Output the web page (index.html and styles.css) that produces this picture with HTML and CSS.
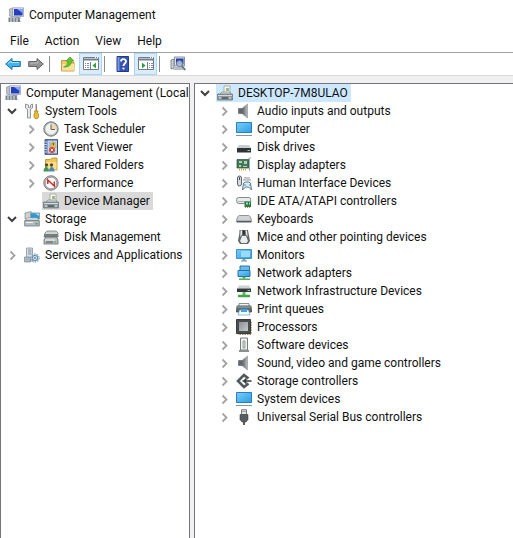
FILE: index.html
```html
<!DOCTYPE html>
<html lang="en">
<head>
<meta charset="utf-8">
<title>Computer Management</title>
<meta name="viewport" content="width=device-width, initial-scale=1">
<link rel="stylesheet" href="styles.css">
</head>
<body>
<svg class="sprite" aria-hidden="true">
  <defs>
    <linearGradient id="g-blue" x1="0" y1="0" x2="1" y2="1"><stop offset="0" stop-color="#7ccdf8"/><stop offset="1" stop-color="#2a9fe4"/></linearGradient>
    <linearGradient id="g-dark" x1="0" y1="0" x2="1" y2="0"><stop offset="0" stop-color="#555a5e"/><stop offset="1" stop-color="#b9bfc3"/></linearGradient>
    <linearGradient id="g-chip" x1="0" y1="0" x2="1" y2="1"><stop offset="0" stop-color="#8d9194"/><stop offset="1" stop-color="#c6c9cb"/></linearGradient>
  </defs>
  <symbol id="open" viewBox="0 0 16 16"><path d="M4 6l4 4 4-4" fill="none" stroke="#404040" stroke-width="2"/></symbol>
  <symbol id="closed" viewBox="0 0 16 16"><path d="M6.500 4.500l4 4-4 4" fill="none" stroke="#a3a3a3" stroke-width="1.800"/></symbol>
  <symbol id="console" viewBox="0 0 16 16">
    <path d="M1.500 2l3-1v9l-3-1z" fill="#b9c1c8" stroke="#778086" stroke-width=".5"/>
    <path d="M4.500 .8h11v8.700h-11z" fill="#dce1ed" stroke="#8d97b5" stroke-width=".7"/>
    <path d="M6 2h8.500v6.500H6z" fill="#243fbd"/><path d="M9 2h5.500v4z" fill="#8aa7f2"/>
    <path d="M8 9.500h4l1 2H7z" fill="#aeb5bd"/>
    <path d="M.5 10.500h11l1 4.500H.5z" fill="#78838b"/><path d="M2 12h2m1 0h2m1 0h2M2 14h2m1 0h2m1 0h2" stroke="#e7ecef"/>
  </symbol>
  <symbol id="back" viewBox="0 0 16 16"><path d="M.7 8L7 2.500V5.500h8.300v5H7v3z" fill="#43b4ee" stroke="#1672ad" stroke-width="1"/><path d="M3 7.500l3-2.500v1.500h8" fill="none" stroke="#a5e2fd"/></symbol>
  <symbol id="forward" viewBox="0 0 16 16"><path d="M15.300 8L9 2.500v3H.7v5H9v3z" fill="#949494" stroke="#646464" stroke-width="1"/><path d="M2 7h8V5" fill="none" stroke="#bdbdbd"/></symbol>
  <symbol id="up" viewBox="0 0 16 16"><path d="M1.500 4.500h5l1 1.500h6.500v9H1.500z" fill="#ecc866" stroke="#b48a34" stroke-width=".8"/><path d="M2 8h12v6.500H2z" fill="#fae39b"/><path d="M3.500 11c3-1 4.500-3 4.500-6H6l4-4 4 4h-2.500c0 4-3 6.500-8 6z" fill="#5fc52d" stroke="#3e961d" stroke-width=".6"/></symbol>
  <symbol id="pane-left" viewBox="0 0 16 16"><path d="M.5 1.500h15v12H.5z" fill="#fff" stroke="#747b82"/><path d="M1 3.500h14" stroke="#6e7f91" stroke-width="2"/><path d="M7.500 6v7" stroke="#747b82"/><path d="M2 7.500h4M2 9.500h4M2 11.500h4" stroke="#7890af" stroke-dasharray="1 1 2"/><path d="M13 6.500v6L9.500 9.500z" fill="#2aa13a"/><path d="M12 1.500h1m1 0h1" stroke="#fff"/></symbol>
  <symbol id="pane-right" viewBox="0 0 16 16"><path d="M.5 1.500h15v12H.5z" fill="#fff" stroke="#747b82"/><path d="M1 3.500h14" stroke="#6e7f91" stroke-width="2"/><path d="M9.500 6v7" stroke="#747b82"/><path d="M11 7.500h4M11 9.500h4M11 11.500h4" stroke="#7890af" stroke-dasharray="1 1 2"/><path d="M4 6.500v6l3.500-3z" fill="#2aa13a"/><path d="M12 1.500h1m1 0h1" stroke="#fff"/></symbol>
  <symbol id="help" viewBox="0 0 16 16"><path d="M2 .5h11.500v15H2z" fill="#3454b4" stroke="#223b87"/><path d="M2.500 1h2v14h-2z" fill="#7796df"/><path d="M6 5.500c0-3 5-3 5-.3C11 7.500 8.500 7.500 8.500 10" fill="none" stroke="#fff" stroke-width="1.800"/><circle cx="8.500" cy="12.500" r="1.100" fill="#fff"/></symbol>
  <symbol id="scan" viewBox="0 0 16 16"><path d="M1 4l3-1v9l-3 1z" fill="#cbd1d2" stroke="#6c7679" stroke-width=".8"/><path d="M4.500 1h10v9h-10z" fill="#dce0e8" stroke="#8993a7"/><path d="M6 2.500h7.500v6H6z" fill="#273ba4"/><path d="M5 11h7l2 3H3z" fill="#b4bdc2"/><circle cx="9.500" cy="7.500" r="3" fill="#b5cae7" fill-opacity=".85" stroke="#66758b"/><path d="M11.800 9.800l3.400 4.200" stroke="#626e7c" stroke-width="1.800"/></symbol>
  <symbol id="tools" viewBox="0 0 16 16"><path d="M1.500 1v4l2 1.500V15h3V6.500l2-1.500V1L6.500 2v2.500h-2V2z" fill="#e4e6e7" stroke="#7d8284" stroke-width=".8"/><path d="M11.500 1h1.500v7h-1.500z" fill="#8b9091"/><path d="M10.500 8h3.500l-.5 2 1 1v3l-1 1.500h-2.500l-1-1.500v-3l1-1z" fill="#edbd2d" stroke="#a9790b" stroke-width=".7"/></symbol>
  <symbol id="clock" viewBox="0 0 16 16"><circle cx="8" cy="8" r="7.200" fill="#a3a8ac" stroke="#777d82"/><circle cx="8" cy="8" r="5.700" fill="#f1f2ec" stroke="#d1d5d7" stroke-width=".7"/><path d="M8 8V2.500A5.500 5.500 0 0 1 13.500 8z" fill="#ebd8ac"/><path d="M8 3.500V8.500h4" fill="none" stroke="#5c6165"/></symbol>
  <symbol id="event" viewBox="0 0 16 16"><path d="M2 .7h12.500v14.600H2z" fill="#5975ac" stroke="#3c5077"/><path d="M4.500 1.500H14v13H4.500z" fill="#c5d3ea"/><path d="M1 3h3M1 5.500h3M1 8h3M1 10.500h3M1 13h3" stroke="#c7d2df"/><path d="M6 4h7M6 6h7M6 8h7" stroke="#8ca2c9"/><path d="M10 2l3.500 6h-6z" fill="#fcd33a" stroke="#bd9420" stroke-width=".5"/><path d="M10.300 4v2.500" stroke="#493800"/><circle cx="9" cy="11" r="3" fill="#d84237"/><path d="M7.800 9.800l2.400 2.400m0-2.400l-2.400 2.400" stroke="#fff"/></symbol>
  <symbol id="shared" viewBox="0 0 16 16"><path d="M2.500 2.500h5L9 1h5v12H2.500z" fill="#eec653" stroke="#b98d28" stroke-width=".8"/><path d="M3 5h10.500v7.500H3z" fill="#fbdf87"/><circle cx="3.500" cy="8" r="1.700" fill="#594b32"/><path d="M.5 14.500c0-6 5.500-6 5.500 0z" fill="#3f9853"/><circle cx="8.500" cy="8" r="1.700" fill="#594b32"/><path d="M6 14.500c0-6 5.500-6 5.500 0z" fill="#438dba"/></symbol>
  <symbol id="performance" viewBox="0 0 16 16"><circle cx="8" cy="8" r="7.200" fill="#bfc0c0" stroke="#777"/><circle cx="8" cy="8" r="5.700" fill="#fff" stroke="#8d8d8d" stroke-width=".7"/><path d="M4.800 9V5l6.500 6V6.500" fill="none" stroke="#cd302a" stroke-width="1.500"/></symbol>
  <symbol id="device" viewBox="0 0 16 16"><path d="M7 1h6v9H7z" fill="#f7f8ee" stroke="#939a91" stroke-width=".7"/><path d="M9 3h3v3H9z" fill="#a0b78d"/><path d="M3 9l2-2h8l1 2" fill="#d9dfe0" stroke="#788489" stroke-width=".7"/><path d="M.5 9h15v6H.5z" fill="#8d989c" stroke="#647176" stroke-width=".7"/><path d="M1 10.500h14" stroke="#d2dadb"/><path d="M5 12h6v2H5z" fill="#5c6a70"/><path d="M2 13h2M12 13h2" stroke="#e7ecec"/></symbol>
  <symbol id="storage" viewBox="0 0 16 16"><path d="M1 2l6-1.500 1 1.500v5L1 8z" fill="#c9d1d3" stroke="#899599" stroke-width=".8"/><path d="M6.500 2h9v6h-9z" fill="#2d9bd0" stroke="#8e9da6"/><path d="M11 2.500h4V5z" fill="#93e3fa"/><path d="M1.500 9l2-2h9.500l2 2z" fill="#eef1f1" stroke="#909a9c" stroke-width=".7"/><path d="M.7 9.500h14.600V15H.7z" fill="#b2babd" stroke="#69777d" stroke-width=".8"/><path d="M2 11.500h7" stroke="#eff3f3"/><path d="M11.500 12h2v1.500h-2z" fill="#3da447"/></symbol>
  <symbol id="disks" viewBox="0 0 16 16"><path d="M2 4l2-2h9l2 2v4H1z" fill="#cfd3d3" stroke="#777f80" stroke-width=".8"/><path d="M1 5h14v3H1z" fill="#777e80"/><path d="M2 9l1-1h10l2 2v5H1v-4z" fill="#b9bebe" stroke="#61696b" stroke-width=".8"/><path d="M2 11h10" stroke="#f4f5f5"/><path d="M3 13h7" stroke="#474f51"/><path d="M11 13h2" stroke="#56a45c"/></symbol>
  <symbol id="services" viewBox="0 0 16 16"><path d="M2.500 1h6v13h-6z" fill="#d7dfe4" stroke="#83939c" stroke-width=".8"/><path d="M4 3h3.500M4 5h3.500M4 7h3.500" stroke="#81939d"/><path d="M.5 10h6v5h-6z" fill="#a8b8c2" stroke="#71818b" stroke-width=".6"/><circle cx="11" cy="11" r="4" fill="none" stroke="#8eacc5" stroke-width="1.500" stroke-dasharray="1.500 1"/><circle cx="11" cy="11" r="2.600" fill="#d8e6f0" stroke="#6f94b4" stroke-width="1.200"/><circle cx="11" cy="11" r="1" fill="#6c8dac"/></symbol>
  <symbol id="speaker" viewBox="0 0 16 16"><path d="M2.500 5.500H6v5H2.500z" fill="#62676b" stroke="#474b4e" stroke-width=".5"/><path d="M6 5.500L11.500 1v14L6 10.500z" fill="url(#g-dark)" stroke="#7a7f83" stroke-width=".5"/></symbol>
  <symbol id="computer" viewBox="0 0 16 16"><path d="M.5 1.500h15v10H.5z" fill="url(#g-blue)" stroke="#2581b9"/><path d="M0 14.500h16" stroke="#8596a2"/></symbol>
  <symbol id="drive" viewBox="0 0 16 16"><path d="M3 6h10l2 3H1z" fill="#c9ccce"/><path d="M1 9h14v4.500H1z" fill="#303335"/><path d="M11.500 11.500H14" stroke="#6cdf68"/></symbol>
  <symbol id="display" viewBox="0 0 16 16"><path d="M1 2.500h12v8.500H1z" fill="#41785c" stroke="#29523e" stroke-width=".7"/><path d="M3 4h3v2H3zM8 4h3v3H8zM3 8h2v2H3zM7 9h4v1H7z" fill="#b8cfa8"/><path d="M3 12.500h7" stroke="#c3a43d" stroke-width="2" stroke-dasharray="1 1"/><path d="M12 2l3-1.500M13.500 1v13" stroke="#a7afb1" fill="none"/></symbol>
  <symbol id="hid" viewBox="0 0 16 16"><rect x="1.500" y="1" width="4" height="10" rx="2" fill="#d6dcdf" stroke="#596268"/><path d="M3.500 2v3" stroke="#4b5359"/><path d="M8 3h6M7 5h8" stroke="#b3b8ba" stroke-width="1.500"/><path d="M6.500 15l1-7 2-1h3l2 1 1 7-3-3h-3z" fill="#d9edf4" stroke="#58798a"/><path d="M8 10h2m3 0h1" stroke="#368ab0"/></symbol>
  <symbol id="ide" viewBox="0 0 16 16"><rect x=".7" y="4.500" width="14" height="6" rx="2" fill="#e9eced" stroke="#7e888a"/><path d="M2 8.500h11" stroke="#a7afb0"/><path d="M8.500 8.500H15V14H8.500z" fill="#27794b"/><path d="M10 9.500h2v2h-2zm3 0h1v2h-1z" fill="#a5dbb0"/><path d="M9 14.500h6" stroke="#a89738" stroke-dasharray="1 1"/></symbol>
  <symbol id="keyboard" viewBox="0 0 16 16"><path d="M3.500 4.500h9q1 0 1.400 1l1.500 3V11H.6V8.500l1.500-3q.4-1 1.400-1z" fill="#d0d3d6" stroke="#777d83" stroke-width=".8"/><path d="M1 10.500h14" stroke="#555b61" stroke-width="1.500"/></symbol>
  <symbol id="mouse" viewBox="0 0 16 16"><path d="M3.500 1h8.500l.7 4 1.300 7-2 3H4l-2-3 1.300-7z" fill="#606669"/><path d="M4.500 1.500h1.500v4L4.300 8zM9.500 1.500h1.500l.7 6.500L10 5.500zM6 7h4l2 5-1.500 2h-5L4 12z" fill="#eceeee"/><path d="M8 1.500v4" stroke="#222" stroke-width="1.500"/></symbol>
  <symbol id="monitor" viewBox="0 0 16 16"><path d="M.5 2.500h15v9H.5z" fill="url(#g-blue)" stroke="#3f92c3"/><path d="M5 4h9v6H5z" fill="#9cdafa"/><path d="M6.500 12h3v1.500h-3z" fill="#8395a0"/><path d="M5 14h6" stroke="#718895"/></symbol>
  <symbol id="network" viewBox="0 0 16 16"><path d="M4 1h9.500v7H4z" fill="#68baf0" stroke="#2d79aa"/><path d="M2 5.500h12v6H2z" fill="url(#g-blue)" stroke="#256f9f"/><path d="M6.500 11.500h3v2h-3z" fill="#5d9b62"/><path d="M3 14.200h11" stroke="#47b44e" stroke-width="1.500"/></symbol>
  <symbol id="infra" viewBox="0 0 16 16"><path d="M3 2.500h10l2 3H1z" fill="#ced3d4"/><path d="M1 5.500h14V9H1z" fill="#34383b"/><path d="M11.500 7.500H14" stroke="#75eb74"/><path d="M6.500 9h3v3h-3z" fill="#66b86a"/><path d="M2 13h12" stroke="#43a749" stroke-width="2.500"/></symbol>
  <symbol id="printer" viewBox="0 0 16 16"><path d="M3 2.500h10V6H3z" fill="#f0f2f3" stroke="#899298"/><path d="M1 5h14l.5 6H.5z" fill="#626a70" stroke="#343a3e" stroke-width=".8"/><path d="M1 6h14" stroke="#adb4b8"/><path d="M3.500 9h9l1.500 5H2z" fill="#f2faff" stroke="#6aa0bc" stroke-width=".7"/><path d="M5 8h6v3H5z" fill="#3ba7e2"/></symbol>
  <symbol id="processor" viewBox="0 0 16 16"><path d="M15 3v12.500H2" fill="none" stroke="#a98445" stroke-width="1.500" stroke-dasharray="1.500 1"/><path d="M.5 .5h14v14H.5z" fill="#4a4d50" stroke="#393c3e"/><path d="M3 3h9v9H3z" fill="url(#g-chip)"/></symbol>
  <symbol id="software" viewBox="0 0 16 16"><path d="M4.500 1h7v12h-7z" fill="#f2f3f1" stroke="#777d79"/><path d="M7 4h2v7H7z" fill="#d3dad3" stroke="#89938a" stroke-width=".8"/><path d="M3 14h10" stroke="#8b918e" stroke-width="2"/></symbol>
  <symbol id="controller" viewBox="0 0 16 16"><path d="M12.500 5.500L8 2 2 8l6 6 4.500-3.500" fill="none" stroke="#55595b" stroke-width="2.600"/><path d="M6.500 8H15.500M10.500 5.500L8 8l2.500 2.500" fill="none" stroke="#35393b" stroke-width="1.700"/></symbol>
  <symbol id="usb" viewBox="0 0 16 16"><path d="M5.500.7h5v5h-5z" fill="#e1e4e5" stroke="#777d80"/><path d="M6.500 2.500h1m1 0h1" stroke="#5e6568"/><path d="M4 5.500h8v5L10 13H6l-2-2.500z" fill="#565c60" stroke="#3c4144" stroke-width=".6"/><path d="M8 12.500V16" stroke="#555b60" stroke-width="2"/></symbol>
</svg>

<header class="titlebar"><svg class="icon"><use href="#console"/></svg><h1>Computer Management</h1></header>
<nav class="menubar"><button>File</button><button>Action</button><button>View</button><button>Help</button></nav>
<div class="toolbar" role="toolbar" aria-label="Console">
  <button class="tool" aria-label="Back"><svg class="icon"><use href="#back"/></svg></button>
  <button class="tool" aria-label="Forward"><svg class="icon"><use href="#forward"/></svg></button>
  <span class="divider"></span>
  <button class="tool" aria-label="Up one level"><svg class="icon"><use href="#up"/></svg></button>
  <button class="tool pressed" aria-label="Console tree" aria-pressed="true"><svg class="icon"><use href="#pane-left"/></svg></button>
  <span class="divider"></span>
  <button class="tool" aria-label="Help contents"><svg class="icon"><use href="#help"/></svg></button>
  <button class="tool pressed" aria-label="Action pane" aria-pressed="true"><svg class="icon"><use href="#pane-right"/></svg></button>
  <span class="divider"></span>
  <button class="tool" aria-label="Scan for hardware changes"><svg class="icon"><use href="#scan"/></svg></button>
</div>

<main class="panes">
  <nav class="pane pane-tree" aria-label="Console tree">
    <div class="row"><button class="item"><svg class="icon"><use href="#console"/></svg>Computer Management (Local</button></div>
    <ul>
      <li>
        <div class="row"><button class="toggle" aria-label="Collapse System Tools"><svg class="icon"><use href="#open"/></svg></button><button class="item"><svg class="icon"><use href="#tools"/></svg>System Tools</button></div>
        <ul class="nested">
          <li class="row"><button class="toggle" aria-label="Expand Task Scheduler"><svg class="icon"><use href="#closed"/></svg></button><button class="item"><svg class="icon"><use href="#clock"/></svg>Task Scheduler</button></li>
          <li class="row"><button class="toggle" aria-label="Expand Event Viewer"><svg class="icon"><use href="#closed"/></svg></button><button class="item"><svg class="icon"><use href="#event"/></svg>Event Viewer</button></li>
          <li class="row"><button class="toggle" aria-label="Expand Shared Folders"><svg class="icon"><use href="#closed"/></svg></button><button class="item"><svg class="icon"><use href="#shared"/></svg>Shared Folders</button></li>
          <li class="row"><button class="toggle" aria-label="Expand Performance"><svg class="icon"><use href="#closed"/></svg></button><button class="item"><svg class="icon"><use href="#performance"/></svg>Performance</button></li>
          <li class="row leaf"><button class="item current"><svg class="icon"><use href="#device"/></svg>Device Manager</button></li>
        </ul>
      </li>
      <li>
        <div class="row"><button class="toggle" aria-label="Collapse Storage"><svg class="icon"><use href="#open"/></svg></button><button class="item"><svg class="icon"><use href="#storage"/></svg>Storage</button></div>
        <ul class="nested">
          <li class="row leaf"><button class="item"><svg class="icon"><use href="#disks"/></svg>Disk Management</button></li>
        </ul>
      </li>
      <li class="row"><button class="toggle" aria-label="Expand Services and Applications"><svg class="icon"><use href="#closed"/></svg></button><button class="item"><svg class="icon"><use href="#services"/></svg>Services and Applications</button></li>
    </ul>
  </nav>
  <section class="pane pane-devices" aria-label="Devices">
    <div class="row"><button class="toggle" aria-label="Collapse DESKTOP-7M8ULAO"><svg class="icon"><use href="#open"/></svg></button><button class="item selected"><svg class="icon"><use href="#device"/></svg>DESKTOP-7M8ULAO</button></div>
    <ul class="nested">
      <li class="row"><button class="toggle" aria-label="Expand"><svg class="icon"><use href="#closed"/></svg></button><button class="item"><svg class="icon"><use href="#speaker"/></svg>Audio inputs and outputs</button></li>
      <li class="row"><button class="toggle" aria-label="Expand"><svg class="icon"><use href="#closed"/></svg></button><button class="item"><svg class="icon"><use href="#computer"/></svg>Computer</button></li>
      <li class="row"><button class="toggle" aria-label="Expand"><svg class="icon"><use href="#closed"/></svg></button><button class="item"><svg class="icon"><use href="#drive"/></svg>Disk drives</button></li>
      <li class="row"><button class="toggle" aria-label="Expand"><svg class="icon"><use href="#closed"/></svg></button><button class="item"><svg class="icon"><use href="#display"/></svg>Display adapters</button></li>
      <li class="row"><button class="toggle" aria-label="Expand"><svg class="icon"><use href="#closed"/></svg></button><button class="item"><svg class="icon"><use href="#hid"/></svg>Human Interface Devices</button></li>
      <li class="row"><button class="toggle" aria-label="Expand"><svg class="icon"><use href="#closed"/></svg></button><button class="item"><svg class="icon"><use href="#ide"/></svg>IDE ATA/ATAPI controllers</button></li>
      <li class="row"><button class="toggle" aria-label="Expand"><svg class="icon"><use href="#closed"/></svg></button><button class="item"><svg class="icon"><use href="#keyboard"/></svg>Keyboards</button></li>
      <li class="row"><button class="toggle" aria-label="Expand"><svg class="icon"><use href="#closed"/></svg></button><button class="item"><svg class="icon"><use href="#mouse"/></svg>Mice and other pointing devices</button></li>
      <li class="row"><button class="toggle" aria-label="Expand"><svg class="icon"><use href="#closed"/></svg></button><button class="item"><svg class="icon"><use href="#monitor"/></svg>Monitors</button></li>
      <li class="row"><button class="toggle" aria-label="Expand"><svg class="icon"><use href="#closed"/></svg></button><button class="item"><svg class="icon"><use href="#network"/></svg>Network adapters</button></li>
      <li class="row"><button class="toggle" aria-label="Expand"><svg class="icon"><use href="#closed"/></svg></button><button class="item"><svg class="icon"><use href="#infra"/></svg>Network Infrastructure Devices</button></li>
      <li class="row"><button class="toggle" aria-label="Expand"><svg class="icon"><use href="#closed"/></svg></button><button class="item"><svg class="icon"><use href="#printer"/></svg>Print queues</button></li>
      <li class="row"><button class="toggle" aria-label="Expand"><svg class="icon"><use href="#closed"/></svg></button><button class="item"><svg class="icon"><use href="#processor"/></svg>Processors</button></li>
      <li class="row"><button class="toggle" aria-label="Expand"><svg class="icon"><use href="#closed"/></svg></button><button class="item"><svg class="icon"><use href="#software"/></svg>Software devices</button></li>
      <li class="row"><button class="toggle" aria-label="Expand"><svg class="icon"><use href="#closed"/></svg></button><button class="item"><svg class="icon"><use href="#speaker"/></svg>Sound, video and game controllers</button></li>
      <li class="row"><button class="toggle" aria-label="Expand"><svg class="icon"><use href="#closed"/></svg></button><button class="item"><svg class="icon"><use href="#controller"/></svg>Storage controllers</button></li>
      <li class="row"><button class="toggle" aria-label="Expand"><svg class="icon"><use href="#closed"/></svg></button><button class="item"><svg class="icon"><use href="#computer"/></svg>System devices</button></li>
      <li class="row"><button class="toggle" aria-label="Expand"><svg class="icon"><use href="#closed"/></svg></button><button class="item"><svg class="icon"><use href="#usb"/></svg>Universal Serial Bus controllers</button></li>
    </ul>
  </section>
</main>
</body>
</html>
```
FILE: styles.css
```css
* { box-sizing: border-box; }

body {
  margin: 0;
  min-height: 100vh;
  display: flex;
  flex-direction: column;
  background: #fff;
  color: #111;
  font: 12px/18px Roboto, "Open Sans", sans-serif;
}

button {
  margin: 0;
  padding: 0;
  border: 0;
  background: none;
  color: inherit;
  font: inherit;
}

ul { margin: 0; padding: 0; list-style: none; }

.sprite { position: absolute; width: 0; height: 0; }
.icon { display: block; flex: none; width: 16px; height: 16px; }

.titlebar {
  display: flex;
  align-items: center;
  gap: 5px;
  height: 30px;
  padding: 0 8px;
}
.titlebar h1 { margin: 0; font-size: 12px; font-weight: 400; }

.menubar {
  display: flex;
  gap: 16px;
  height: 22px;
  padding: 0 10px;
}

.toolbar {
  display: flex;
  height: 24px;
  padding-left: 1px;
  border-top: 1px solid #a0a0a0;
  border-bottom: 1px solid #d9d9d9;
}
.tool {
  display: grid;
  place-items: center;
  width: 23px;
}
.pressed { background: #d9ecfb; border: 1px solid #a9d5f7; }
.divider { width: 1px; margin: 3px 6px 3px 2px; background: #8c8c8c; }

.panes {
  flex: 1;
  display: grid;
  grid-template-columns: 190px 1fr;
  gap: 4px;
  padding-top: 7px;
  background: #f0f0f0;
}
.pane {
  min-width: 0;
  overflow: hidden;
  border: 1px solid #73777d;
  border-bottom: 0;
  background: #fff;
}
.pane-tree { padding-left: 3px; }
.pane-devices { padding-left: 2px; border-right: 0; }

.nested { padding-left: 19px; }
.row { display: flex; height: 18px; }
.leaf { padding-left: 19px; }
.toggle { width: 19px; flex: none; }
.item {
  display: flex;
  align-items: center;
  gap: 5px;
  padding: 0 3px 0 1px;
  white-space: nowrap;
}
.current { background: #d9d9d9; }
.selected { background: #cce8ff; }
```
